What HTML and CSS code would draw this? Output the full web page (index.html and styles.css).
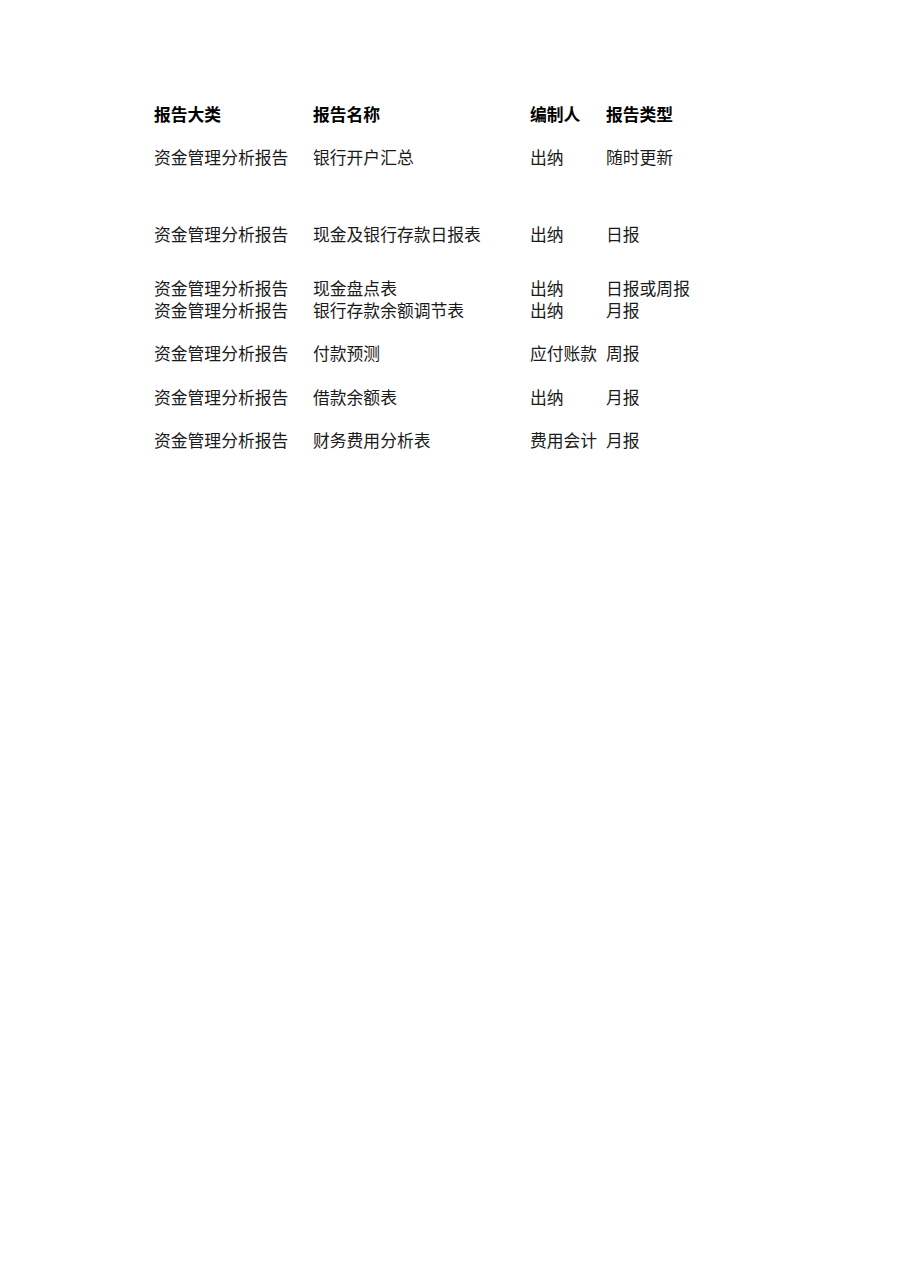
FILE: index.html
```html
<!DOCTYPE html>
<html lang="zh">
<head>
<meta charset="utf-8">
<link rel="stylesheet" href="styles.css">
</head>
<body>
<div class="page">
  <div class="table">
    <div class="c h">报告大类</div><div class="c h">报告名称</div><div class="c h">编制人</div><div class="c h">报告类型</div>
    <div class="c">资金管理分析报告</div><div class="c">银行开户汇总</div><div class="c">出纳</div><div class="c">随时更新</div>
    <div class="c">资金管理分析报告</div><div class="c">现金及银行存款日报表</div><div class="c">出纳</div><div class="c">日报</div>
    <div class="c">资金管理分析报告</div><div class="c">现金盘点表</div><div class="c">出纳</div><div class="c">日报或周报</div>
    <div class="c">资金管理分析报告</div><div class="c">银行存款余额调节表</div><div class="c">出纳</div><div class="c">月报</div>
    <div class="c">资金管理分析报告</div><div class="c">付款预测</div><div class="c">应付账款</div><div class="c">周报</div>
    <div class="c">资金管理分析报告</div><div class="c">借款余额表</div><div class="c">出纳</div><div class="c">月报</div>
    <div class="c">资金管理分析报告</div><div class="c">财务费用分析表</div><div class="c">费用会计</div><div class="c">月报</div>
  </div>
</div>
</body>
</html>
```
FILE: styles.css
```css
html, body {
  margin: 0;
  padding: 0;
  background: #fff;
}
.page {
  padding: 103px 0 0 154px;
  font-family: "Noto Sans CJK SC", "Noto Sans", sans-serif;
  font-size: 16.8px;
  color: #1a1a1a;
}
.table {
  display: grid;
  grid-template-columns: 159px 217px 76px auto;
  grid-template-rows: 43px 77px 54px 22px 43px 44px 43px 22px;
}
.c {
  line-height: 22px;
  white-space: nowrap;
}
.h {
  font-weight: bold;
  color: #000;
}
```
